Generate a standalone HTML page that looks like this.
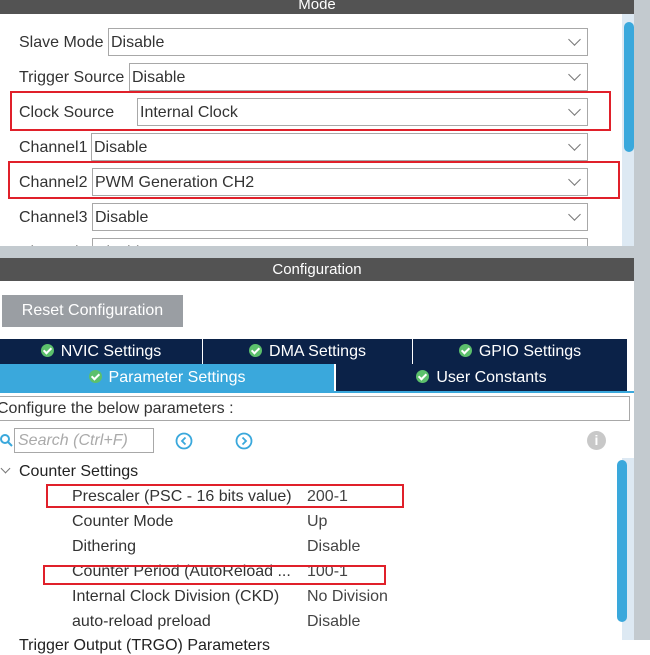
<!DOCTYPE html>
<html><head><style>
body{margin:0;width:650px;height:640px;overflow:hidden;background:#fff;font-family:"Liberation Sans",sans-serif;position:relative;color:#333}
div,span{position:absolute;box-sizing:border-box}
.hdr{left:0;width:634px;background:#535353;color:#fff;font-size:15px;text-align:center}
.lbl{font-size:16px;color:#333;left:19px}
.sel{border:1px solid #a8a8a8;height:28px;font-size:16px;color:#333;padding:5px 2px 3px;right:62px;background:#fff;white-space:nowrap}
.chev{right:8px;top:6px;width:9px;height:9px;border-right:1.5px solid #777;border-bottom:1.5px solid #777;transform:rotate(45deg)}
.red{border:2px solid #e0202a}
.tab{background:#0b2248;color:#fff;font-size:16px;text-align:center;height:25px;line-height:25px}
.ck{display:inline-block;position:relative;width:13px;height:13px;border-radius:50%;background:#5cc06c;margin-right:7px;vertical-align:-1px}
.ck:after{content:"";position:absolute;left:4px;top:2px;width:3px;height:6px;border-right:2px solid #fff;border-bottom:2px solid #fff;transform:rotate(45deg)}
.row{font-size:16px;color:#333;left:72px;white-space:nowrap}
.val{font-size:16px;color:#444;left:307px}
</style></head><body>
<div class="hdr" style="top:0;height:14px;line-height:10px">Mode</div>
<div style="left:634px;top:0;width:16px;height:640px;background:#c3cacf"></div>
<div style="left:622px;top:14px;width:12px;height:232px;background:#dde9f3"></div>
<div style="left:624px;top:22px;width:10px;height:130px;background:#3aa8dc;border-radius:5px"></div>

<div class="lbl" style="top:34px">Slave Mode</div>
<div class="sel" style="left:108px;top:28px">Disable<span class="chev"></span></div>
<div class="lbl" style="top:69px">Trigger Source</div>
<div class="sel" style="left:129px;top:63px">Disable<span class="chev"></span></div>
<div class="red" style="left:10px;top:91px;width:601px;height:40px"></div>
<div class="lbl" style="top:104px">Clock Source</div>
<div class="sel" style="left:137px;top:98px">Internal Clock<span class="chev"></span></div>
<div class="lbl" style="top:139px">Channel1</div>
<div class="sel" style="left:91px;top:133px">Disable<span class="chev"></span></div>
<div class="red" style="left:8px;top:161px;width:612px;height:38px"></div>
<div class="lbl" style="top:174px">Channel2</div>
<div class="sel" style="left:92px;top:168px">PWM Generation CH2<span class="chev"></span></div>
<div class="lbl" style="top:209px">Channel3</div>
<div class="sel" style="left:92px;top:203px">Disable<span class="chev"></span></div>
<div class="lbl" style="top:244px">Channel4</div>
<div class="sel" style="left:92px;top:238px">Disable</div>
<div style="left:0;top:246px;width:634px;height:12px;background:#c3cacf"></div>

<div class="hdr" style="top:258px;height:23px;line-height:23px">Configuration</div>
<div style="left:2px;top:295px;width:181px;height:32px;background:#9a9ea3;color:#fff;font-size:16px;line-height:32px;text-align:center">Reset Configuration</div>
<div class="tab" style="left:0;top:339px;width:202px"><span class="ck" style="position:relative"></span>NVIC Settings</div>
<div class="tab" style="left:203px;top:339px;width:209px"><span class="ck" style="position:relative"></span>DMA Settings</div>
<div class="tab" style="left:413px;top:339px;width:214px"><span class="ck" style="position:relative"></span>GPIO Settings</div>
<div class="tab" style="left:0;top:364px;width:334px;height:27px;line-height:27px;background:#3aa8dc"><span class="ck" style="position:relative"></span>Parameter Settings</div>
<div class="tab" style="left:336px;top:364px;width:291px;height:27px;line-height:27px"><span class="ck" style="position:relative"></span>User Constants</div>
<div style="left:0;top:391px;width:634px;height:2px;background:#3aa8dc"></div>
<div style="left:-4px;top:396px;width:634px;height:25px;border:1px solid #a8a8a8;font-size:16px;line-height:24px;padding-left:0">Configure the below parameters :</div>
<svg style="position:absolute;left:0;top:434px" width="13" height="14"><circle cx="5" cy="5" r="4" fill="none" stroke="#3aa8dc" stroke-width="2"/><line x1="8" y1="8" x2="12" y2="12" stroke="#3aa8dc" stroke-width="2"/></svg>
<div style="left:14px;top:428px;width:140px;height:25px;border:1px solid #a8a8a8;font-size:16px;font-style:italic;color:#aaa;line-height:24px;padding-left:3px;white-space:nowrap;overflow:hidden">Search (Ctrl+F)</div>
<svg style="position:absolute;left:175px;top:432px" width="18" height="18"><circle cx="9" cy="9" r="7.5" fill="none" stroke="#3aa8dc" stroke-width="1.8"/><path d="M10.5 5.5 L7 9 L10.5 12.5" fill="none" stroke="#3aa8dc" stroke-width="1.8"/></svg>
<svg style="position:absolute;left:235px;top:432px" width="18" height="18"><circle cx="9" cy="9" r="7.5" fill="none" stroke="#3aa8dc" stroke-width="1.8"/><path d="M7.5 5.5 L11 9 L7.5 12.5" fill="none" stroke="#3aa8dc" stroke-width="1.8"/></svg>
<div style="left:587px;top:431px;width:19px;height:19px;border-radius:50%;background:#c8c8c8;color:#fff;font-size:14px;font-weight:bold;line-height:19px;text-align:center">i</div>

<div style="left:622px;top:458px;width:12px;height:182px;background:#dde9f3"></div>
<div style="left:617px;top:460px;width:10px;height:162px;background:#3aa8dc;border-radius:5px"></div>
<div style="left:2px;top:465px;width:7px;height:7px;border-right:1px solid #777;border-bottom:1px solid #777;transform:rotate(45deg)"></div>
<div style="left:19px;top:463px;font-size:16px;color:#222">Counter Settings</div>
<div class="red" style="left:46px;top:484px;width:358px;height:24px"></div>
<div class="row" style="top:488px">Prescaler (PSC - 16 bits value)</div><div class="val" style="top:488px">200-1</div>
<div class="row" style="top:513px">Counter Mode</div><div class="val" style="top:513px">Up</div>
<div class="row" style="top:538px">Dithering</div><div class="val" style="top:538px">Disable</div>
<div class="row" style="top:563px">Counter Period (AutoReload ...</div><div class="val" style="top:563px">100-1</div>
<div class="red" style="left:43px;top:565px;width:343px;height:20px"></div>
<div class="row" style="top:588px">Internal Clock Division (CKD)</div><div class="val" style="top:588px">No Division</div>
<div class="row" style="top:613px">auto-reload preload</div><div class="val" style="top:613px">Disable</div>
<div style="left:19px;top:637px;font-size:16px;color:#222;white-space:nowrap">Trigger Output (TRGO) Parameters</div>
</body></html>
